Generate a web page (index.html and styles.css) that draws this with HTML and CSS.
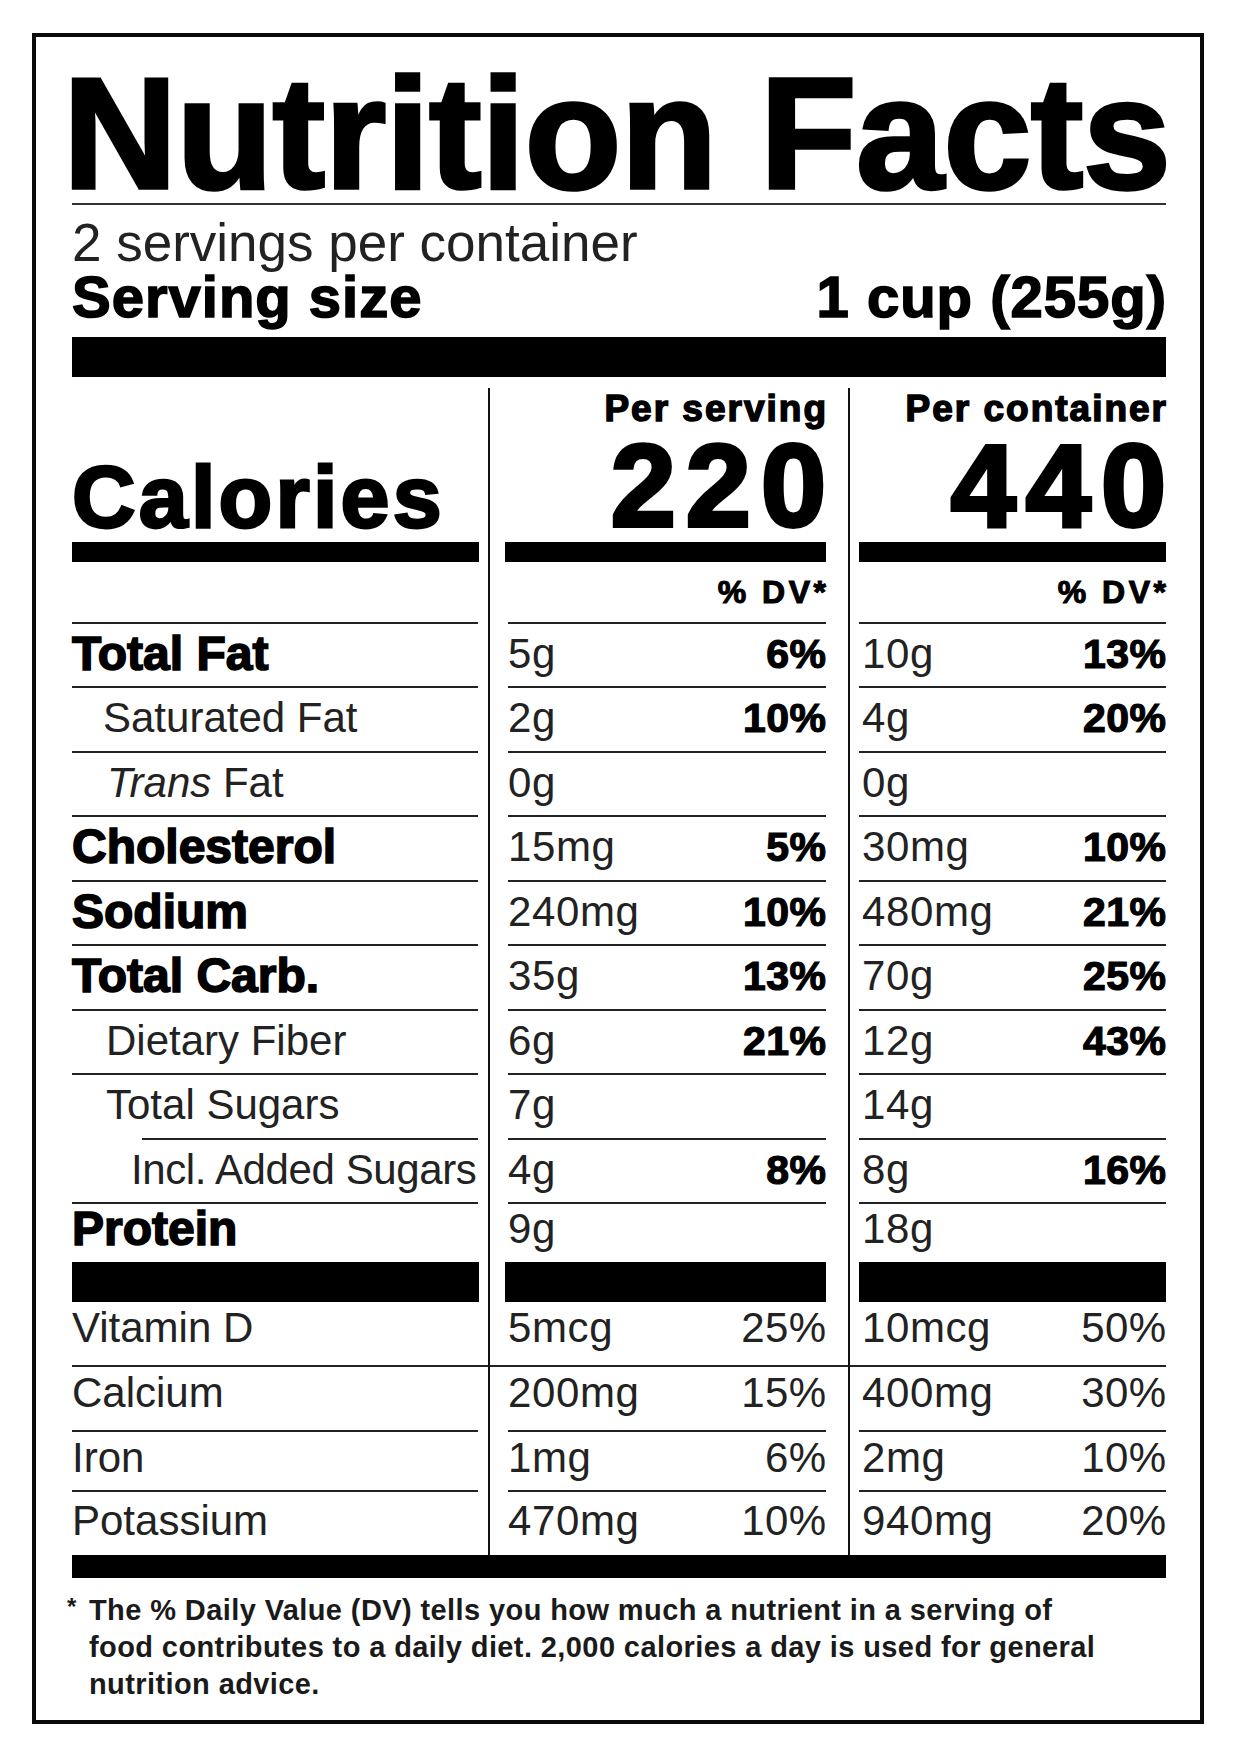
FILE: index.html
```html
<!DOCTYPE html>
<html lang="en">
<head>
<meta charset="utf-8">
<title>Nutrition Facts</title>
<link rel="stylesheet" href="styles.css">
</head>
<body>
<div class="label">
  <h1 class="title"><span>Nutrition Facts</span></h1>
  <div class="servings">2 servings per container</div>
  <div class="size-row">
    <span class="size-label">Serving size</span>
    <span class="size-value">1 cup (255g)</span>
  </div>

  <div class="grid">
    <div class="vline v1"></div>
    <div class="vline v2"></div>

    <!-- header -->
    <div class="c1 cal-cell"><span class="calories">Calories</span></div>
    <div class="c2 head-cell"><span class="per">Per serving</span><span class="kcal">220</span></div>
    <div class="c3 head-cell"><span class="per">Per container</span><span class="kcal">440</span></div>

    <!-- % DV -->
    <div class="c1 dv-cell"></div>
    <div class="c2 dv-cell"><span class="dv">% DV*</span></div>
    <div class="c3 dv-cell"><span class="dv">% DV*</span></div>

    <div class="c1 row"><span class="lbl b">Total Fat</span></div>
    <div class="c2 row val"><span class="amt">5g</span><span class="pct">6%</span></div>
    <div class="c3 row val"><span class="amt">10g</span><span class="pct">13%</span></div>

    <div class="c1 row"><span class="lbl sub">Saturated Fat</span></div>
    <div class="c2 row val"><span class="amt">2g</span><span class="pct">10%</span></div>
    <div class="c3 row val"><span class="amt">4g</span><span class="pct">20%</span></div>

    <div class="c1 row"><span class="lbl sub trans"><i>Trans</i> Fat</span></div>
    <div class="c2 row val"><span class="amt">0g</span></div>
    <div class="c3 row val"><span class="amt">0g</span></div>

    <div class="c1 row"><span class="lbl b">Cholesterol</span></div>
    <div class="c2 row val"><span class="amt">15mg</span><span class="pct">5%</span></div>
    <div class="c3 row val"><span class="amt">30mg</span><span class="pct">10%</span></div>

    <div class="c1 row"><span class="lbl b">Sodium</span></div>
    <div class="c2 row val"><span class="amt">240mg</span><span class="pct">10%</span></div>
    <div class="c3 row val"><span class="amt">480mg</span><span class="pct">21%</span></div>

    <div class="c1 row"><span class="lbl b">Total Carb.</span></div>
    <div class="c2 row val"><span class="amt">35g</span><span class="pct">13%</span></div>
    <div class="c3 row val"><span class="amt">70g</span><span class="pct">25%</span></div>

    <div class="c1 row"><span class="lbl sub fiber">Dietary Fiber</span></div>
    <div class="c2 row val"><span class="amt">6g</span><span class="pct">21%</span></div>
    <div class="c3 row val"><span class="amt">12g</span><span class="pct">43%</span></div>

    <div class="c1 row rule-indent"><span class="lbl sub sugars">Total Sugars</span></div>
    <div class="c2 row val"><span class="amt">7g</span></div>
    <div class="c3 row val"><span class="amt">14g</span></div>

    <div class="c1 row"><span class="lbl subsub">Incl. Added Sugars</span></div>
    <div class="c2 row val"><span class="amt">4g</span><span class="pct">8%</span></div>
    <div class="c3 row val"><span class="amt">8g</span><span class="pct">16%</span></div>

    <div class="c1 row bar-row"><span class="lbl b">Protein</span></div>
    <div class="c2 row val bar-row"><span class="amt">9g</span></div>
    <div class="c3 row val bar-row"><span class="amt">18g</span></div>

    <div class="c1 vrow vd"><span class="lbl">Vitamin D</span></div>
    <div class="c2 vrow val vd"><span class="amt">5mcg</span><span class="pct light">25%</span></div>
    <div class="c3 vrow val vd"><span class="amt">10mcg</span><span class="pct light">50%</span></div>

    <div class="c1 vrow"><span class="lbl">Calcium</span></div>
    <div class="c2 vrow val"><span class="amt">200mg</span><span class="pct light">15%</span></div>
    <div class="c3 vrow val"><span class="amt">400mg</span><span class="pct light">30%</span></div>

    <div class="c1 vrow"><span class="lbl">Iron</span></div>
    <div class="c2 vrow val"><span class="amt">1mg</span><span class="pct light">6%</span></div>
    <div class="c3 vrow val"><span class="amt">2mg</span><span class="pct light">10%</span></div>

    <div class="c1 vrow last"><span class="lbl">Potassium</span></div>
    <div class="c2 vrow val last"><span class="amt">470mg</span><span class="pct light">10%</span></div>
    <div class="c3 vrow val last"><span class="amt">940mg</span><span class="pct light">20%</span></div>
  </div>

  <div class="endbar"></div>

  <div class="footnote">
    <span class="ast">*</span>
    <p class="note">The % Daily Value (DV) tells you how much a nutrient in a serving of<br>food contributes to a daily diet. 2,000 calories a day is used for general<br>nutrition advice.</p>
  </div>
</div>
</body>
</html>
```

FILE: styles.css
```css
html, body {
  margin: 0;
  padding: 0;
  background: #ffffff;
}

body {
  font-family: "Liberation Sans", Arial, Helvetica, sans-serif;
  color: #000;
}

.label {
  margin: 33px 0 0 32px;
  width: 1172px;
  box-sizing: border-box;
  border: 4px solid #0a0a0a;
  padding: 0 34px 17px 36px;
}

/* ---------- Title block ---------- */
.title {
  margin: 26px 0 0;
  font-size: 158px;
  line-height: 140px;
  font-weight: 700;
  letter-spacing: -0.5px;
  white-space: nowrap;
  border-bottom: 2px solid #333;
  -webkit-text-stroke: 3.5px #000;
}

.title span {
  margin-left: -9px;
}

.servings {
  margin-top: 11px;
  font-size: 53px;
  line-height: 54px;
  color: #222;
  white-space: nowrap;
}

.size-row {
  display: flex;
  justify-content: space-between;
  align-items: baseline;
  font-size: 58px;
  line-height: 54px;
  font-weight: 700;
  letter-spacing: 1px;
  padding-bottom: 13px;
  border-bottom: 40px solid #000;
  -webkit-text-stroke: 1.6px #000;
}

.size-value {
  margin-right: -1px;
}

/* ---------- Main grid ---------- */
.grid {
  display: grid;
  grid-template-columns: 406px 10px 2px 18px 318px 22px 2px 9px 307px;
  grid-template-rows:
    185px 62px
    repeat(9, 64.44px)
    98px
    65px 65px 60px 63px;
}

.c1 { grid-column: 1; }
.c2 { grid-column: 5; }
.c3 { grid-column: 9; }

.vline {
  grid-row: 1 / -1;
  margin-top: 11px;
  background: #111;
}
.v1 { grid-column: 3; }
.v2 { grid-column: 7; }

/* header row */
.cal-cell {
  display: flex;
  align-items: flex-end;
  border-bottom: 20px solid #000;
  margin-right: -1px;
}

.calories {
  font-size: 88px;
  line-height: 90px;
  font-weight: 700;
  letter-spacing: 3.2px;
  white-space: nowrap;
  -webkit-text-stroke: 2.8px #000;
}

.head-cell {
  display: flex;
  flex-direction: column;
  align-items: flex-end;
  padding-top: 12px;
  border-bottom: 20px solid #000;
}

.c2.head-cell {
  margin-left: -3px;
}

.per {
  font-size: 37px;
  line-height: 40px;
  font-weight: 700;
  letter-spacing: 2px;
  margin-right: -2px;
  white-space: nowrap;
  -webkit-text-stroke: 1.5px #000;
}

.kcal {
  font-size: 117px;
  line-height: 113px;
  font-weight: 700;
  letter-spacing: 10px;
  margin-right: -10px;
  -webkit-text-stroke: 4px #000;
}

/* % DV row */
.dv-cell {
  box-sizing: border-box;
  border-bottom: 2px solid #222;
  padding-top: 10px;
  text-align: right;
}

.dv {
  font-size: 32px;
  line-height: 40px;
  font-weight: 700;
  letter-spacing: 3.5px;
  margin-right: -3.5px;
  -webkit-text-stroke: 1.1px #000;
}

/* nutrient rows */
.row {
  box-sizing: border-box;
  padding-top: 5px;
  line-height: 50px;
  border-bottom: 2px solid #222;
  white-space: nowrap;
}

.val {
  display: flex;
  justify-content: space-between;
  align-items: baseline;
}

.c3.val {
  padding-left: 3px;
}

.lbl {
  font-size: 42px;
  color: #222;
}

.lbl.b {
  font-size: 48px;
  font-weight: 700;
  color: #000;
  -webkit-text-stroke: 1.6px #000;
}

.lbl.sub {
  padding-left: 31px;
}

.lbl.trans {
  padding-left: 35px;
}

.lbl.fiber,
.lbl.sugars {
  padding-left: 34px;
}

.lbl.subsub {
  padding-left: 59px;
  letter-spacing: -0.4px;
}

.amt {
  font-size: 42px;
  letter-spacing: 0.6px;
  color: #222;
}

.pct {
  font-size: 41px;
  font-weight: 700;
  letter-spacing: 0.5px;
  margin-right: -0.5px;
  -webkit-text-stroke: 1.2px #000;
}

.pct.light {
  font-size: 42px;
  font-weight: 400;
  color: #222;
  letter-spacing: 0.3px;
  margin-right: -0.3px;
  -webkit-text-stroke: 0;
}

.rule-indent {
  border-bottom: 0;
  background: linear-gradient(#222, #222) no-repeat right bottom / calc(100% - 70px) 2px;
}

.bar-row {
  padding-top: 0;
  border-bottom: 40px solid #000;
}

.c1.bar-row {
  margin-right: -1px;
}

.c2.bar-row {
  margin-left: -3px;
  padding-left: 3px;
}

/* vitamins */
.vrow {
  box-sizing: border-box;
  padding-top: 1px;
  line-height: 50px;
  border-bottom: 2px solid #222;
  white-space: nowrap;
}

.vrow .lbl {
  font-size: 42px;
}

/* Vitamin D rule runs through the column dividers */
.c1.vd {
  margin-right: -10px;
}
.c2.vd {
  margin-left: -18px;
  padding-left: 18px;
  margin-right: -22px;
  padding-right: 22px;
}
.c3.vd {
  margin-left: -9px;
  padding-left: 12px;
}

.vrow.last {
  border-bottom: 0;
  padding-top: 4px;
}

/* bottom */
.endbar {
  height: 23px;
  background: #000;
}

.footnote {
  display: flex;
  margin: 14px 0 0 -5px;
  color: #1a1a1a;
}

.ast {
  flex: none;
  width: 22px;
  font-size: 24px;
  line-height: 30px;
  font-weight: 700;
}

.note {
  margin: 0;
  font-size: 29px;
  line-height: 37px;
  font-weight: 700;
  letter-spacing: 0.4px;
  white-space: nowrap;
}
```
